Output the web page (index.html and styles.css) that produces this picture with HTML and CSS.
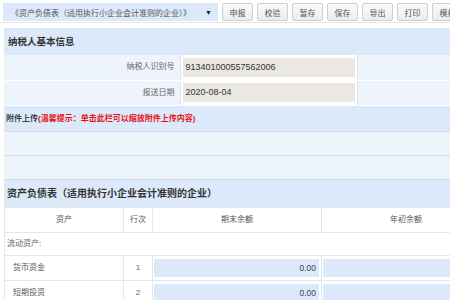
FILE: index.html
```html
<!DOCTYPE html>
<html lang="zh-CN">
<head>
    <meta charset="UTF-8">
    <meta name="viewport" content="width=device-width, initial-scale=1.0">
    <title>资产负债表</title>
    <link rel="stylesheet" href="styles.css">
</head>
<body>
    <div class="toolbar">
        <div class="report-select">
            <span>《资产负债表（适用执行小企业会计准则的企业）》</span>
            <span class="arrow">▼</span>
        </div>
        <button class="btn">申报</button>
        <button class="btn">校验</button>
        <button class="btn">暂存</button>
        <button class="btn">保存</button>
        <button class="btn">导出</button>
        <button class="btn">打印</button>
        <button class="btn">模板</button>
    </div>

    <div class="page">
        <div class="section-title">纳税人基本信息</div>
        <table class="info-table">
            <colgroup>
                <col style="width: 176px">
                <col style="width: 177px">
                <col>
            </colgroup>
            <tr>
                <td class="label">纳税人识别号</td>
                <td class="value"><div class="readonly">913401000557562006</div></td>
                <td></td>
            </tr>
            <tr>
                <td class="label">报送日期</td>
                <td class="value"><div class="readonly">2020-08-04</div></td>
                <td></td>
            </tr>
        </table>

        <div class="attach-title">附件上传<span class="tip">(温馨提示：单击此栏可以缩放附件上传内容)</span></div>
        <div class="attach-row"></div>
        <div class="attach-row"></div>

        <div class="section-title sheet-title">资产负债表（适用执行小企业会计准则的企业）</div>
        <table class="sheet">
            <colgroup>
                <col style="width: 119px">
                <col style="width: 29px">
                <col style="width: 169px">
                <col style="width: 169px">
            </colgroup>
            <tr class="head">
                <td>资产</td>
                <td>行次</td>
                <td>期末余额</td>
                <td>年初余额</td>
            </tr>
            <tr class="group">
                <td colspan="4">流动资产:</td>
            </tr>
            <tr>
                <td class="item">货币资金</td>
                <td class="line">1</td>
                <td class="amount"><div class="num">0.00</div></td>
                <td class="amount"><div class="num"></div></td>
            </tr>
            <tr>
                <td class="item">短期投资</td>
                <td class="line">2</td>
                <td class="amount"><div class="num">0.00</div></td>
                <td class="amount"><div class="num"></div></td>
            </tr>
        </table>
    </div>
</body>
</html>
```

FILE: styles.css
```css
:root {
    --head-bg: #dbe9fa;
    --row-bg: #eef4fb;
    --line: #d3dde8;
}

html, body {
    margin: 0;
    padding: 0;
    overflow: hidden;
    background: #fff;
    font-family: "Liberation Sans", "Noto Sans CJK SC", sans-serif;
    color: #333;
}

body {
    min-width: 490px;
}

/* top toolbar */
.toolbar {
    display: flex;
    align-items: center;
    gap: 4px;
    height: 20px;
    padding: 2px 0 0 3px;
    border-bottom: 1px solid #ece5d8;
}

.report-select {
    display: flex;
    align-items: center;
    justify-content: space-between;
    width: 215px;
    height: 18px;
    box-sizing: border-box;
    padding: 0 6px 0 8px;
    background: var(--head-bg);
    font-size: 8px;
    color: #555;
}

.report-select .arrow {
    font-size: 7px;
    color: #222;
}

.btn {
    width: 31px;
    height: 18px;
    padding: 0;
    font-family: inherit;
    font-size: 8px;
    color: #555;
    background: linear-gradient(#fbfbfb, #ececec);
    border: 1px solid #cfcfcf;
    border-radius: 2px;
    flex-shrink: 0;
}

.page {
    margin: 5px 0 0 4px;
}

.section-title {
    height: 27px;
    line-height: 27px;
    padding-left: 4px;
    background: var(--head-bg);
    font-size: 9.5px;
    font-weight: bold;
    color: #333;
}

/* taxpayer info */
.info-table {
    width: 100%;
    border-collapse: collapse;
    table-layout: fixed;
}

.info-table tr {
    height: 25px;
}

.info-table td {
    padding: 0;
    background: var(--row-bg);
    border-bottom: 1px solid #fff;
    border-right: 1px solid #dbe4ee;
    line-height: 12px;
}

.info-table .label {
    text-align: right;
    padding-right: 5px;
    font-size: 8px;
    color: #666;
}

.info-table .value {
    padding: 2px;
    background: #fff;
}

.readonly {
    height: 19px;
    line-height: 19px;
    padding-left: 3px;
    background: #ebe8e2;
    font-size: 9px;
    color: #333;
}

/* attachments */
.attach-title {
    height: 25px;
    line-height: 25px;
    padding-left: 2px;
    background: var(--head-bg);
    font-size: 8px;
    font-weight: bold;
    color: #444;
}

.attach-title .tip {
    color: #e8121b;
}

.attach-row {
    height: 23px;
    background: var(--row-bg);
    border-top: 1px solid var(--line);
}

/* balance sheet */
.sheet-title {
    border-top: 1px solid var(--line);
    padding-left: 3px;
    font-size: 10px;
    font-weight: 600;
}

.sheet {
    border-collapse: collapse;
    table-layout: fixed;
    width: 486px;
}

.sheet tr {
    height: 25px;
}

.sheet td {
    padding: 0;
    border: 1px solid #dfe7f0;
    font-size: 8px;
    line-height: 12px;
    color: #555;
}

.sheet .head td {
    text-align: center;
}

.sheet .group {
    height: 23px;
}

.sheet .group td {
    padding-left: 2px;
    color: #666;
}

.sheet .item {
    padding-left: 8px;
    color: #555;
}

.sheet .line {
    text-align: center;
    color: #666;
}

.sheet .amount {
    padding: 0 2px 0 1px;
}

.num {
    height: 18px;
    line-height: 18px;
    padding-right: 3px;
    background: var(--head-bg);
    text-align: right;
    font-size: 8.5px;
    color: #444;
}
```
